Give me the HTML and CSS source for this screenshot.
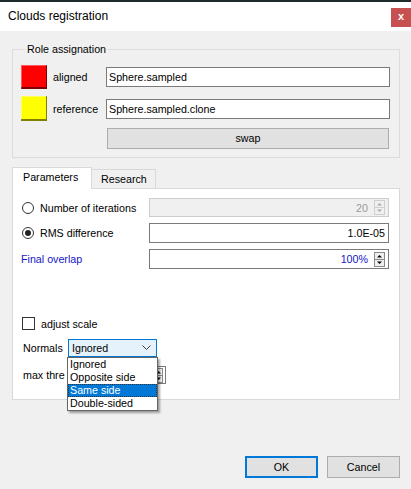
FILE: index.html
```html
<!DOCTYPE html>
<html>
<head>
<meta charset="utf-8">
<link rel="stylesheet" href="styles.css">
</head>
<body>
<div class="window">
  <div class="titlebar">
    <span class="title">Clouds registration</span>
    <span class="close">x</span>
  </div>
  <div class="content">
    <fieldset class="group">
      <legend>Role assignation</legend>
      <div class="roles">
        <span class="swatch red"></span>
        <span class="lbl">aligned</span>
        <div class="field">Sphere.sampled</div>
        <span class="swatch yellow"></span>
        <span class="lbl">reference</span>
        <div class="field">Sphere.sampled.clone</div>
        <div class="btn swap">swap</div>
      </div>
    </fieldset>

    <div class="tabs">
      <div class="tabbar">
        <div class="tab active">Parameters</div>
        <div class="tab">Research</div>
      </div>
      <div class="pane">
        <div class="params">
          <label class="opt"><span class="radio"></span>Number of iterations</label>
          <div class="spinbox disabled">
            <span class="val">20</span>
            <svg class="spin" width="11" height="15" viewBox="0 0 11 15"><rect x="0.5" y="0.5" width="10" height="14" fill="#f0f0f0" stroke="#cfcfcf"/><line x1="1" y1="7.5" x2="10" y2="7.5" stroke="#cfcfcf"/><path d="M3 5.5 L5.5 3 L8 5.5 Z" fill="#a8a8a8"/><path d="M3 9.5 L5.5 12 L8 9.5 Z" fill="#a8a8a8"/></svg>
          </div>
          <label class="opt"><span class="radio checked"></span>RMS difference</label>
          <div class="spinbox"><span class="val">1.0E-05</span></div>
          <span class="blue plain">Final overlap</span>
          <div class="spinbox">
            <span class="val blue">100%</span>
            <svg class="spin" width="11" height="15" viewBox="0 0 11 15"><rect x="0.5" y="0.5" width="10" height="14" fill="#f0f0f0" stroke="#8a8a8a"/><line x1="1" y1="7.5" x2="10" y2="7.5" stroke="#8a8a8a"/><path d="M3 5.5 L5.5 3 L8 5.5 Z" fill="#000"/><path d="M3 9.5 L5.5 12 L8 9.5 Z" fill="#000"/></svg>
          </div>
        </div>

        <label class="check"><span class="box"></span>adjust scale</label>

        <div class="normals">
          <span>Normals</span>
          <div class="combo">
            <span>Ignored</span>
            <svg class="chev" width="9" height="6" viewBox="0 0 9 6"><path d="M0.5 0.5 L4.5 4.5 L8.5 0.5" fill="none" stroke="#444" stroke-width="1"/></svg>
            <div class="dropdown">
              <div class="item">Ignored</div>
              <div class="item">Opposite side</div>
              <div class="item sel">Same side</div>
              <div class="item">Double-sided</div>
            </div>
          </div>
        </div>

        <div class="threads">
          <span class="tlabel">max thre</span>
          <div class="spinbox small">
            <svg class="spin" width="9" height="15" viewBox="0 0 9 15"><rect x="0.5" y="0.5" width="8" height="14" fill="#f0f0f0" stroke="#8a8a8a"/><line x1="1" y1="7.5" x2="8" y2="7.5" stroke="#8a8a8a"/><path d="M2 5.5 L4.5 3 L7 5.5 Z" fill="#000"/><path d="M2 9.5 L4.5 12 L7 9.5 Z" fill="#000"/></svg>
          </div>
        </div>
      </div>
    </div>

    <div class="footer">
      <div class="btn ok">OK</div>
      <div class="btn">Cancel</div>
    </div>
  </div>
</div>
</body>
</html>
```

FILE: styles.css
```css
html, body {
  margin: 0;
  padding: 0;
}
body {
  font-family: "Liberation Sans", Arial, sans-serif;
  font-size: 10.7px;
  color: #000;
  background: #f0f0f0;
}
.window {
  width: 411px;
  height: 489px;
  display: flex;
  flex-direction: column;
  background: #f0f0f0;
  overflow: hidden;
}
.titlebar {
  height: 29px;
  border-top: 2px solid #1f2a2a;
  background: #fff;
  display: flex;
  justify-content: space-between;
  align-items: flex-start;
}
.title {
  font-size: 12px;
  margin-left: 8px;
  line-height: 29px;
}
.close {
  margin-top: 6px;
  width: 20px;
  height: 19px;
  background: #c75050;
  color: #fff;
  font-weight: bold;
  font-size: 11px;
  line-height: 17px;
  text-align: center;
}
.content {
  flex: 1;
  display: flex;
  flex-direction: column;
  padding: 0 11px 0 12px;
}
.group {
  margin: 10px 0 0 0;
  padding: 8px 9px 8px 8px;
  border: 1px solid #dcdcdc;
  min-width: 0;
}
.group legend {
  padding: 0 2px;
  margin-left: 4px;
  line-height: 16px;
  height: 16px;
}
.roles {
  display: grid;
  grid-template-columns: 26px 47px 1fr;
  grid-template-rows: 24px 25px 21px;
  column-gap: 6px;
  row-gap: 7px;
  align-items: center;
}
.swatch {
  width: 26px;
  height: 24px;
  box-sizing: border-box;
  box-shadow: inset -1px -2px 0 rgba(0,0,0,0.5), inset 1px 1px 0 rgba(255,255,255,0.35);
}
.red { background: #ff0000; }
.yellow { background: #ffff00; height: 25px; }
.lbl { white-space: nowrap; }
.field {
  height: 20px;
  box-sizing: border-box;
  border: 1px solid #7a7a7a;
  background: #fff;
  padding-left: 2px;
  line-height: 18px;
}
.btn {
  height: 22px;
  box-sizing: border-box;
  background: #e1e1e1;
  border: 1px solid #adadad;
  text-align: center;
  line-height: 20px;
}
.swap {
  grid-column: 3;
  height: 21px;
  line-height: 19px;
  margin: 0 1px;
}
.tabs {
  margin-top: 9px;
}
.tabbar {
  display: flex;
  align-items: flex-end;
  height: 21px;
}
.tab {
  height: 19px;
  box-sizing: border-box;
  border: 1px solid #d9d9d9;
  border-bottom: none;
  background: #f0f0f0;
  padding: 0 8px 0 9px;
  line-height: 18px;
}
.tab + .tab {
  border-left: none;
}
.tab.active {
  background: #fff;
  width: 80px;
  padding-left: 10px;
  line-height: 19px;
  position: relative;
  z-index: 1;
  margin-bottom: -1px;
  height: 22px;
}
.pane {
  height: 212px;
  box-sizing: border-box;
  border: 1px solid #d9d9d9;
  background: #fff;
  padding: 9px 10px 0 8px;
}
.params {
  display: grid;
  grid-template-columns: 128px 1fr;
  grid-template-rows: 19px 20px 20px;
  row-gap: 6px;
  align-items: center;
}
.opt {
  display: flex;
  align-items: center;
  gap: 6px;
  padding-left: 1px;
  white-space: nowrap;
}
.radio {
  width: 12px;
  height: 12px;
  box-sizing: border-box;
  border: 1px solid #333;
  border-radius: 50%;
  background: #fff;
  display: flex;
  align-items: center;
  justify-content: center;
}
.radio.checked::after {
  content: "";
  width: 6px;
  height: 6px;
  border-radius: 50%;
  background: #222;
}
.blue { color: #1515c8; }
.spinbox {
  height: 100%;
  box-sizing: border-box;
  border: 1px solid #7a7a7a;
  background: #fff;
  display: flex;
  align-items: center;
  justify-content: flex-end;
  padding-right: 3px;
  gap: 6px;
}
.spinbox.disabled {
  background: #f0f0f0;
  border-color: #cccccc;
  color: #9a9a9a;
}
.spinbox .val { line-height: 16px; }
.spinbox .spin { flex: none; }
.check {
  display: flex;
  align-items: center;
  gap: 6px;
  margin-top: 48px;
  padding-left: 1px;
  height: 13px;
}
.box {
  width: 13px;
  height: 13px;
  box-sizing: border-box;
  border: 1px solid #333;
  background: #fff;
}
.normals {
  display: flex;
  align-items: center;
  margin-top: 9px;
  padding-left: 2px;
  height: 18px;
}
.normals > span {
  width: 45px;
}
.combo {
  position: relative;
  width: 89px;
  height: 18px;
  box-sizing: border-box;
  border: 1px solid #0078d7;
  background: #e5f1fb;
  display: flex;
  align-items: center;
  justify-content: space-between;
  padding: 0 5px 0 3px;
}
.chev { flex: none; }
.dropdown {
  position: absolute;
  top: 17px;
  left: -2px;
  width: 91px;
  box-sizing: border-box;
  border: 1px solid #646464;
  background: #fff;
  box-shadow: 2px 2px 2px rgba(0,0,0,0.35);
  z-index: 5;
  padding: 0;
}
.item {
  height: 13px;
  line-height: 13px;
  padding-left: 2px;
  white-space: nowrap;
}
.item.sel {
  background: #0078d7;
  color: #fff;
  outline: 1px dotted #333;
  outline-offset: -1px;
}
.threads {
  display: flex;
  align-items: center;
  margin-top: 9px;
  padding-left: 2px;
  height: 18px;
}
.tlabel {
  width: 43px;
  white-space: nowrap;
}
.spinbox.small {
  width: 60px;
  height: 18px;
  padding-right: 2px;
  margin-left: 40px;
}
.footer {
  margin-top: auto;
  display: flex;
  justify-content: flex-end;
  gap: 9px;
  padding-bottom: 11px;
}
.footer .btn {
  width: 73px;
}
.btn.ok {
  border: 2px solid #0078d7;
  line-height: 18px;
}
```
